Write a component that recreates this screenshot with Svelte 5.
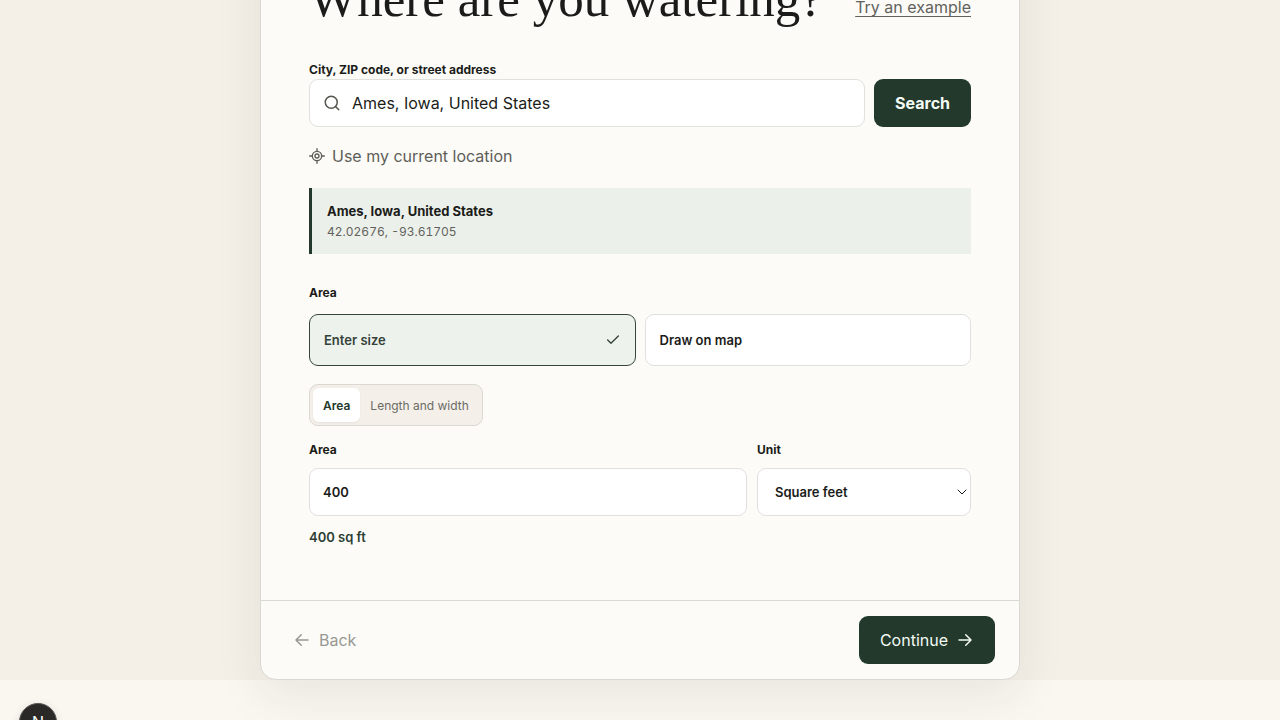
<script lang="ts">
    let query = $state('Ames, Iowa, United States');
    let mode = $state('size');
    let shape = $state('area');
    let amount = $state('400');
    let unit = $state('sq ft');

    const place = { name: 'Ames, Iowa, United States', coords: '42.02676, -93.61705' };
    const modes = [
        { id: 'size', label: 'Enter size' },
        { id: 'map', label: 'Draw on map' }
    ];
    const shapes = [
        { id: 'area', label: 'Area' },
        { id: 'sides', label: 'Length and width' }
    ];
</script>

<div class="viewport">
    <main class="shell">
        <section class="card">
            <div class="body">
                <header class="heading">
                    <h1>Where are you watering?</h1>
                    <a href="#example">Try an example</a>
                </header>

                <form class="search" onsubmit={(e) => e.preventDefault()}>
                    <label class="label" for="place">City, ZIP code, or street address</label>
                    <div class="search-row">
                        <div class="search-box">
                            <svg width="18" height="18" viewBox="0 0 24 24" aria-hidden="true">
                                <circle cx="11" cy="11" r="8" />
                                <path d="m21 21-4.3-4.3" />
                            </svg>
                            <input id="place" type="text" bind:value={query} />
                        </div>
                        <button class="primary search-button" type="submit">Search</button>
                    </div>
                </form>

                <button class="locate" type="button">
                    <svg width="16" height="16" viewBox="0 0 24 24" aria-hidden="true">
                        <path d="M1 12h4M19 12h4M12 1v4M12 19v4" />
                        <circle cx="12" cy="12" r="7" />
                        <circle cx="12" cy="12" r="3" />
                    </svg>
                    Use my current location
                </button>

                <div class="place">
                    <strong>{place.name}</strong>
                    <span>{place.coords}</span>
                </div>

                <h2 class="label">Area</h2>
                <div class="modes">
                    {#each modes as item}
                        <button type="button" class="mode" class:active={mode === item.id} aria-pressed={mode === item.id} onclick={() => (mode = item.id)}>
                            {item.label}
                            {#if mode === item.id}
                                <svg width="16" height="16" viewBox="0 0 24 24" aria-hidden="true">
                                    <path d="M20 6 9 17l-5-5" />
                                </svg>
                            {/if}
                        </button>
                    {/each}
                </div>

                <div class="segments">
                    {#each shapes as item}
                        <button type="button" class:active={shape === item.id} aria-pressed={shape === item.id} onclick={() => (shape = item.id)}>{item.label}</button>
                    {/each}
                </div>

                <div class="fields">
                    <div class="field">
                        <label class="label" for="amount">Area</label>
                        <input id="amount" type="text" inputmode="decimal" bind:value={amount} />
                    </div>
                    <div class="field">
                        <label class="label" for="unit">Unit</label>
                        <div class="select">
                            <select id="unit" bind:value={unit}>
                                <option value="sq ft">Square feet</option>
                                <option value="sq m">Square meters</option>
                                <option value="acres">Acres</option>
                            </select>
                            <svg width="10" height="6" viewBox="0 0 10 6" aria-hidden="true">
                                <path d="M1 1l4 4 4-4" />
                            </svg>
                        </div>
                    </div>
                </div>
                <p class="result">{amount} {unit}</p>
            </div>

            <footer>
                <button class="back" type="button" disabled>
                    <svg width="18" height="18" viewBox="0 0 24 24" aria-hidden="true">
                        <path d="M20 12H4M11 5l-7 7 7 7" />
                    </svg>
                    Back
                </button>
                <button class="primary continue" type="button">
                    Continue
                    <svg width="18" height="18" viewBox="0 0 24 24" aria-hidden="true">
                        <path d="M4 12h16M13 5l7 7-7 7" />
                    </svg>
                </button>
            </footer>
        </section>
    </main>

    <button class="badge" type="button" aria-label="Open dev tools">N</button>
</div>

<style>
    :global(body) {
        margin: 0;
        background: #faf7f1;
    }

    .viewport {
        position: relative;
        height: 100vh;
        overflow: hidden;
        font-family: Inter, "Liberation Sans", sans-serif;
        font-size: 16px;
        color: #1b1c19;
    }

    button,
    input,
    select {
        box-sizing: border-box;
        margin: 0;
        font: inherit;
        color: inherit;
    }

    button {
        padding: 0;
        border: 0;
        background: none;
        cursor: pointer;
    }

    svg {
        flex: none;
        fill: none;
        stroke: currentColor;
        stroke-width: 2;
        stroke-linecap: round;
        stroke-linejoin: round;
    }

    /* the page sits scrolled down past the top of the card */
    .shell {
        display: flex;
        justify-content: center;
        margin-top: -80px;
        background: #f4f0e8;
    }

    .card {
        box-sizing: border-box;
        width: 100%;
        max-width: 760px;
        border: 1px solid #d9d9d4;
        border-radius: 16px;
        background: #fcfbf7;
        box-shadow: 0 16px 48px rgba(40, 40, 35, 0.08);
    }

    .body {
        padding: 48px 48px 54px;
    }

    .heading {
        display: flex;
        align-items: flex-end;
        justify-content: space-between;
        margin-bottom: 32px;
    }

    h1 {
        margin: 0;
        font: 400 51px/60px "Liberation Serif", serif;
    }

    .heading a {
        line-height: 24px;
        margin-bottom: 10px;
        color: #62625d;
        text-underline-offset: 3px;
    }

    .label {
        display: block;
        margin: 0;
        font-size: 12px;
        font-weight: 700;
        line-height: 18px;
    }

    .search-row {
        display: flex;
        gap: 9px;
    }

    .search-box {
        box-sizing: border-box;
        display: flex;
        flex: 1;
        align-items: center;
        gap: 11px;
        height: 48px;
        padding: 0 14px 0 13px;
        border: 1px solid #e0e0dc;
        border-radius: 9px;
        background: #fff;
    }

    .search-box svg {
        color: #55554f;
    }

    .search-box input {
        flex: 1;
        min-width: 0;
        padding: 0;
        border: 0;
        outline: 0;
        background: none;
    }

    .primary {
        height: 48px;
        padding: 0 21px;
        border-radius: 9px;
        background: #23392c;
        color: #f3fbf5;
    }

    .search-button {
        font-weight: 700;
    }

    .locate {
        display: flex;
        align-items: center;
        gap: 7px;
        margin: 17px 0 20px;
        line-height: 24px;
        color: #5e5e59;
    }

    .place {
        display: flex;
        flex-direction: column;
        margin-bottom: 30px;
        padding: 12px 15px;
        border-left: 3px solid #23392c;
        background: #ecf0ea;
    }

    .place strong {
        font-size: 13px;
        font-weight: 700;
        line-height: 22px;
    }

    .place span {
        font-size: 12px;
        font-variant-numeric: tabular-nums;
        line-height: 20px;
        color: #62625d;
    }

    .modes {
        display: grid;
        grid-template-columns: 1fr 1fr;
        gap: 9px;
        margin: 12px 0 18px;
    }

    .mode {
        display: flex;
        align-items: center;
        justify-content: space-between;
        height: 52px;
        padding: 0 14px;
        border: 1px solid #e0e0dc;
        border-radius: 9px;
        background: #fff;
        font-size: 13px;
        font-weight: 600;
    }

    .mode.active {
        border-color: #37463d;
        background: #edf2ec;
        color: #35423a;
    }

    .segments {
        display: flex;
        width: fit-content;
        padding: 3px;
        border: 1px solid #d9d8d2;
        border-radius: 9px;
        background: #f4f0e9;
    }

    .segments button {
        height: 34px;
        padding: 0 10px;
        border-radius: 6px;
        font-size: 12px;
        color: #6b6b65;
    }

    .segments .active {
        background: #fff;
        box-shadow: 0 1px 2px rgba(0, 0, 0, 0.06);
        font-weight: 600;
        color: #23392c;
    }

    .fields {
        display: grid;
        grid-template-columns: 438px 1fr;
        gap: 10px;
        margin-top: 15px;
    }

    .field .label {
        margin-bottom: 9px;
    }

    .field input,
    select {
        width: 100%;
        height: 48px;
        padding: 0 13px;
        border: 1px solid #e0e0dc;
        border-radius: 9px;
        background: #fff;
        font-size: 13px;
        font-weight: 600;
    }

    .select {
        position: relative;
    }

    select {
        padding: 0 17px;
        appearance: none;
    }

    .select svg {
        position: absolute;
        top: 21px;
        right: 4px;
        stroke-width: 1;
        pointer-events: none;
    }

    .result {
        margin: 12px 0 0;
        font-size: 13px;
        font-weight: 600;
        line-height: 18px;
        color: #2c3f34;
    }

    footer {
        display: flex;
        align-items: center;
        justify-content: space-between;
        padding: 15px 24px;
        border-top: 1px solid #dadad5;
    }

    .back,
    .continue {
        display: flex;
        align-items: center;
        gap: 8px;
    }

    .back {
        padding-left: 8px;
        color: #989893;
    }

    .badge {
        position: absolute;
        left: 19px;
        bottom: -21px;
        width: 38px;
        height: 38px;
        border: 1px solid #555;
        border-radius: 50%;
        background: #2a2927;
        box-shadow: 0 2px 8px rgba(0, 0, 0, 0.12);
        color: #fff;
    }
</style>
